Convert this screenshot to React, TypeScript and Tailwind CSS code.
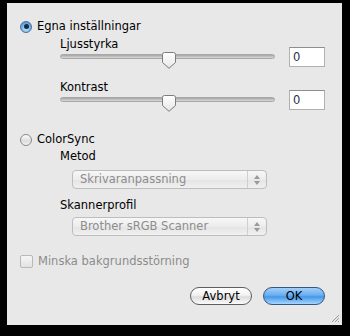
import React from 'react';

const font = { fontFamily: '"DejaVu Sans", "Liberation Sans", sans-serif' };

function Radio({ checked }: { checked: boolean }) {
    return checked ? (
        <div className="w-[12px] h-[12px] rounded-full border border-[#4a6f9c] bg-[radial-gradient(circle_at_50%_70%,#bfe3ff_0%,#6fb0ea_55%,#3c7fc7_100%)] flex items-center justify-center shrink-0">
            <div className="w-[5px] h-[5px] rounded-full bg-[#1b2a3a]" />
        </div>
    ) : (
        <div className="w-[12px] h-[12px] rounded-full border border-[#8a8a8a] bg-[linear-gradient(#fdfdfd,#dcdcdc_60%,#f4f4f4)] shrink-0" />
    );
}

function Slider() {
    return (
        <div className="relative h-[16px] w-[215px]">
            <div className="absolute left-0 right-0 top-[2px] h-[5px] rounded-full border border-[#a8a8a8] bg-[linear-gradient(#a4a4a4,#dadada)]" />
            {/* knob */}
            <svg className="absolute left-[102px] top-0" width="14" height="17" viewBox="0 0 14 17">
                <defs>
                    <linearGradient id="kg" x1="0" y1="0" x2="0" y2="1">
                        <stop offset="0" stopColor="#ffffff" />
                        <stop offset="1" stopColor="#e6e6e6" />
                    </linearGradient>
                </defs>
                <path d="M2.5 0.5 H11.5 Q13.5 0.5 13.5 2.5 V10.5 L7 16.3 L0.5 10.5 V2.5 Q0.5 0.5 2.5 0.5 Z" fill="url(#kg)" stroke="#7c7c7c" strokeWidth="1" />
            </svg>
        </div>
    );
}

function SliderBlock({ label }: { label: string }) {
    return (
        <div className="flex">
            <div className="flex flex-col ml-[53px]">
                <div className="h-[15px] text-[11.5px] leading-[15px] text-black">{label}</div>
                <Slider />
            </div>
            <div className="ml-[14px] mt-[10px] w-[36px] h-[20px] bg-white border border-[#b0b0b0] border-t-[#8e8e8e] text-[11.5px] leading-[18px] pl-[3px] text-[#26324a]">
                0
            </div>
        </div>
    );
}

function Popup({ text }: { text: string }) {
    return (
        <div className="ml-[65px] w-[195px] h-[19px] rounded-[4px] border border-[#bdbdbd] bg-[linear-gradient(#f7f7f7,#ececec_50%,#e4e4e4_51%,#f0f0f0)] flex items-center">
            <div className="flex-1 pl-[7px] text-[11.5px] text-[#8d8d8d] leading-[17px]">{text}</div>
            <div className="w-[19px] h-full border-l border-[#cfcfcf] flex flex-col items-center justify-center gap-[2px]">
                <svg width="6" height="4" viewBox="0 0 6 4"><path d="M3 0 L6 4 H0 Z" fill="#9a9a9a" /></svg>
                <svg width="6" height="4" viewBox="0 0 6 4"><path d="M0 0 H6 L3 4 Z" fill="#9a9a9a" /></svg>
            </div>
        </div>
    );
}

export default function App() {
    return (
        <div className="w-[350px] h-[336px] bg-black pt-[3px] pl-[7px] overflow-hidden" style={font}>
            <div className="relative w-[335px] h-[322px] bg-[#e8e8e8] flex flex-col pt-[16px]">
                {/* Egna inställningar */}
                <div className="flex items-center h-[15px] pl-[13px] gap-[5px]">
                    <Radio checked />
                    <span className="text-[11.5px] text-black">Egna inställningar</span>
                </div>

                <div className="mt-[3px]">
                    <SliderBlock label="Ljusstyrka" />
                </div>
                <div className="mt-[12px]">
                    <SliderBlock label="Kontrast" />
                </div>

                {/* ColorSync */}
                <div className="mt-[21px] flex items-center h-[15px] pl-[13px] gap-[5px]">
                    <Radio checked={false} />
                    <span className="text-[11.5px] text-black">ColorSync</span>
                </div>

                <div className="mt-[2px] ml-[53px] h-[15px] text-[11.5px] leading-[15px] text-black">Metod</div>
                <div className="mt-[6px]">
                    <Popup text="Skrivaranpassning" />
                </div>
                <div className="mt-[9px] ml-[53px] h-[15px] text-[11.5px] leading-[15px] text-black">Skannerprofil</div>
                <div className="mt-[4px]">
                    <Popup text="Brother sRGB Scanner" />
                </div>

                {/* Minska bakgrundsstörning */}
                <div className="mt-[18px] flex items-center h-[15px] pl-[13px] gap-[5px]">
                    <div className="w-[13px] h-[13px] rounded-[2px] border border-[#b8b8b8] bg-[linear-gradient(#f6f6f6,#e2e2e2)]" />
                    <span className="text-[11.5px] text-[#8c8c8c]">Minska bakgrundsstörning</span>
                </div>

                {/* Buttons */}
                <div className="mt-[18px] flex pl-[183px] gap-[11px]">
                    <button className="w-[62px] h-[18px] rounded-full border border-[#5e5e5e] bg-[linear-gradient(#ffffff,#f2f2f2_45%,#dcdcdc_55%,#fbfbfb)] text-[11.5px] leading-[16px] text-black">
                        Avbryt
                    </button>
                    <button className="w-[62px] h-[18px] rounded-full border border-[#34577f] bg-[linear-gradient(#a3cff8,#69aef0_45%,#4597e8_55%,#a6d6ff)] text-[11.5px] leading-[16px] text-black">
                        OK
                    </button>
                </div>

                {/* resize grip */}
                <svg className="absolute right-[2px] bottom-[2px]" width="10" height="10" viewBox="0 0 10 10">
                    <path d="M9 2 L2 9 M9 5 L5 9 M9 8 L8 9" stroke="#9a9a9a" strokeWidth="1" />
                </svg>
            </div>
        </div>
    );
}
